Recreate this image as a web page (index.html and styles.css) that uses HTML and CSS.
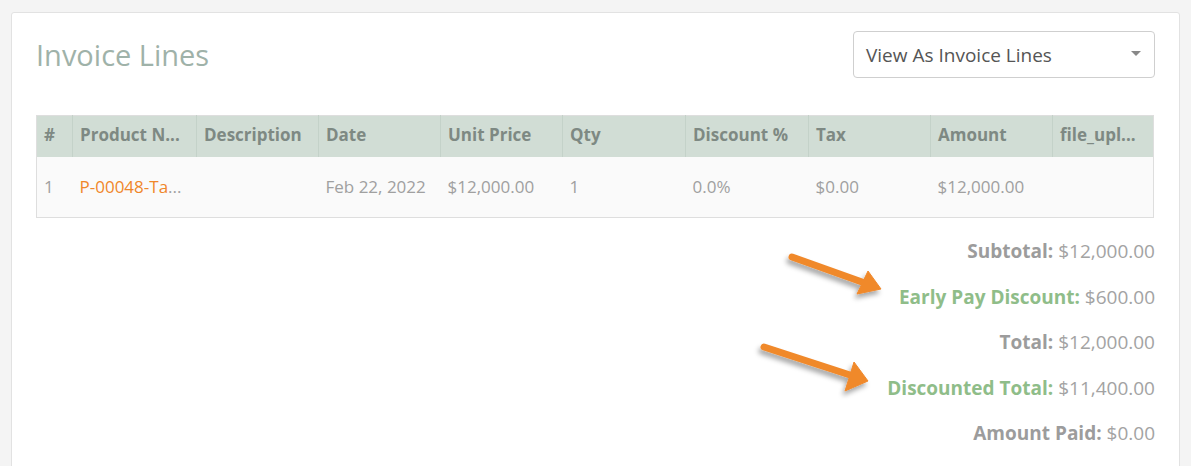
FILE: index.html
```html
<!DOCTYPE html>
<html>
<head>
<meta charset="utf-8">
<link rel="stylesheet" href="styles.css">
</head>
<body>
<div class="page">
  <div class="card">
    <div class="card-head">
      <h2 class="title">Invoice Lines</h2>
      <div class="select">
        <span class="select-text">View As Invoice Lines</span>
        <span class="caret"></span>
      </div>
    </div>
    <table class="lines">
      <colgroup>
        <col style="width:36px"><col style="width:124px"><col style="width:122px"><col style="width:122px"><col style="width:122px"><col style="width:123px"><col style="width:123px"><col style="width:122px"><col style="width:122px"><col>
      </colgroup>
      <thead>
        <tr><th>#</th><th>Product N...</th><th>Description</th><th>Date</th><th>Unit Price</th><th>Qty</th><th>Discount %</th><th>Tax</th><th>Amount</th><th>file_upl...</th></tr>
      </thead>
      <tbody>
        <tr><td>1</td><td><a class="link">P-00048-Ta</a>...</td><td></td><td>Feb 22, 2022</td><td>$12,000.00</td><td>1</td><td>0.0%</td><td>$0.00</td><td>$12,000.00</td><td></td></tr>
      </tbody>
    </table>
    <div class="summary">
      <div class="sum-row"><span class="lbl">Subtotal:</span> $12,000.00</div>
      <div class="sum-row"><span class="lbl green">Early Pay Discount:</span> $600.00</div>
      <div class="sum-row"><span class="lbl">Total:</span> $12,000.00</div>
      <div class="sum-row"><span class="lbl green">Discounted Total:</span> $11,400.00</div>
      <div class="sum-row"><span class="lbl">Amount Paid:</span> $0.00</div>
    </div>
    <svg class="arrows" width="1191" height="466" viewBox="0 0 1191 466">
      <defs>
        <filter id="sh" x="-20%" y="-40%" width="140%" height="180%">
          <feDropShadow dx="-2" dy="4" stdDeviation="2.5" flood-color="#000" flood-opacity="0.35"/>
        </filter>
      </defs>
      <g fill="#f0892c" stroke="#f0892c" filter="url(#sh)">
        <line x1="792" y1="257" x2="862" y2="282" stroke-width="7" stroke-linecap="round"/>
        <polygon points="881,289 868,271 857,294" stroke-width="1" stroke-linejoin="round"/>
        <line x1="764" y1="347" x2="850" y2="375" stroke-width="7" stroke-linecap="round"/>
        <polygon points="868,381 854,362 845,391" stroke-width="1" stroke-linejoin="round"/>
      </g>
    </svg>
  </div>
</div>
</body>
</html>
```
FILE: styles.css
```css
* { box-sizing: border-box; }
html, body { margin: 0; padding: 0; background: #f4f4f4; }
body { font-family: "Open Sans", "Liberation Sans", sans-serif; overflow: hidden; }
.page { padding: 12px 11px 0 11px; height: 466px; }
.card {
  position: relative;
  background: #fff;
  border: 1px solid #e2e2e2;
  border-radius: 3px;
  height: 470px;
  padding: 18px 24px 0 24px;
}
.card-head { display: flex; justify-content: space-between; align-items: flex-start; }
.title {
  margin: 0;
  padding-top: 6px;
  font-size: 29px;
  font-weight: 400;
  line-height: 36px;
  color: #9fb2a9;
}
.select {
  width: 302px;
  height: 47px;
  border: 1px solid #cfcfcf;
  border-radius: 4px;
  display: flex;
  align-items: center;
  justify-content: space-between;
  padding: 0 13px 0 12px;
}
.select-text { font-size: 19px; color: #555; }
.caret {
  width: 0; height: 0;
  border-left: 5px solid transparent;
  border-right: 5px solid transparent;
  border-top: 5px solid #888;
  margin-top: -2px;
}
.lines {
  margin-top: 37px;
  width: 1118px;
  border-collapse: collapse;
  table-layout: fixed;
  border: 1px solid #dedede;
}
.lines th {
  background: #d1ddd5;
  height: 41px;
  text-align: left;
  font-size: 17px;
  font-weight: 700;
  color: #7e8983;
  padding: 0 7px 3px 7px;
  border-left: 1px solid #c4d2c9;
  white-space: nowrap;
  overflow: hidden;
}
.lines th:first-child { border-left: none; }
.lines td {
  background: #fafafa;
  height: 61px;
  font-size: 17px;
  color: #a0a0a0;
  padding: 0 7px;
  white-space: nowrap;
  overflow: hidden;
}
.link { color: #f0872a; }
.summary {
  margin-top: 11px;
  display: flex;
  flex-direction: column;
  align-items: flex-end;
}
.sum-row {
  height: 45.5px;
  line-height: 45.5px;
  font-size: 19px;
  color: #a3a3a3;
}
.lbl { font-weight: 700; color: #9c9c9c; }
.lbl.green { color: #8fbd89; }
.arrows { position: absolute; left: -12px; top: -13px; pointer-events: none; }
```
